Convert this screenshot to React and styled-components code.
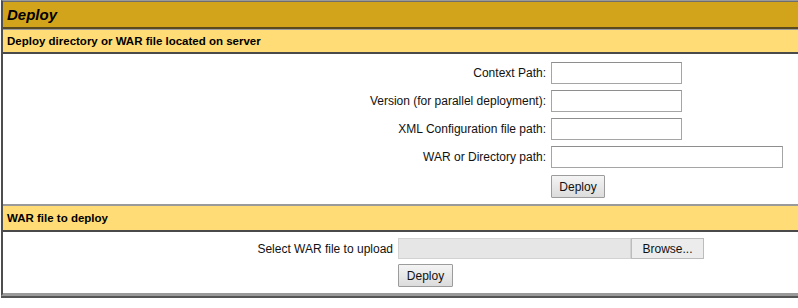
import React from 'react';
import styled, { createGlobalStyle } from 'styled-components';

const GlobalStyle = createGlobalStyle`
    body {
        margin: 0;
        background: #ffffff;
        font-family: "Liberation Sans", Arial, sans-serif;
    }
`;

const Page = styled.div`
    width: 798px;
    padding-left: 1px;
    box-sizing: border-box;
`;

const Table = styled.div`
    display: flex;
    flex-direction: column;
    border-top: 1px solid #9a9a9a;
    border-left: 2px solid #4e4e4e;
    border-bottom: 2px solid #9a9a9a;
    box-shadow: 0 2px 0 #555;
    margin-bottom: 2px;
`;

const Title = styled.div`
    height: 25px;
    background: #d2a41c;
    border-top: 1px solid #6e6e6e;
    border-bottom: 2px solid #5a4a1c;
    padding: 0 4px;
    display: flex;
    align-items: center;
    font-size: 15px;
    font-weight: bold;
    font-style: italic;
    color: #000;
`;

const SectionHeader = styled.div`
    height: ${p => p.$height}px;
    background: #ffdc75;
    border-top: 1px solid #9a9a9a;
    border-bottom: 2px solid #4a4a4a;
    padding: 0 4px;
    display: flex;
    align-items: center;
    font-size: 11.5px;
    font-weight: bold;
    color: #000;
`;

const FormBody = styled.div`
    display: grid;
    grid-template-columns: ${p => p.$labelWidth}px auto;
    column-gap: 5px;
    row-gap: ${p => p.$rowGap}px;
    padding: ${p => p.$pad};
    border-bottom: 1px solid #9a9a9a;
    background: #fff;
`;

const Label = styled.label`
    text-align: right;
    align-self: center;
    font-size: 12px;
    color: #111;
`;

const TextInput = styled.input`
    width: ${p => p.$width}px;
    height: 22px;
    box-sizing: border-box;
    border: 1px solid #a5a5a5;
    border-top-color: #8e8e8e;
    background: #fff;
    margin: 0;
    padding: 0 3px;
    font: 12px "Liberation Sans", Arial, sans-serif;
`;

const Button = styled.button`
    width: ${p => p.$width}px;
    height: 23px;
    box-sizing: border-box;
    margin-top: ${p => p.$offset || 0}px;
    border: 1px solid #9c9c9c;
    border-radius: 1px;
    background: linear-gradient(#f4f4f4, #dcdcdc);
    font: 12px "Liberation Sans", Arial, sans-serif;
    color: #111;
    padding: 0;
    justify-self: start;
`;

const FileBox = styled.div`
    display: flex;
    height: 21px;
`;

const FileField = styled.div`
    width: 233px;
    box-sizing: border-box;
    background: #e6e6e6;
    border: 1px solid #d2d2d2;
`;

const BrowseButton = styled.div`
    width: 73px;
    box-sizing: border-box;
    background: #ececec;
    border: 1px solid #bcbcbc;
    display: flex;
    align-items: center;
    justify-content: center;
    font-size: 12px;
    color: #111;
`;

const Spacer = styled.div``;

const serverFields = [
    { label: 'Context Path:', width: 131 },
    { label: 'Version (for parallel deployment):', width: 131 },
    { label: 'XML Configuration file path:', width: 131 },
    { label: 'WAR or Directory path:', width: 232 },
];

export default function App() {
    return (
        <Page>
            <GlobalStyle />
            <Table>
                <Title>Deploy</Title>
                <SectionHeader $height={22}>Deploy directory or WAR file located on server</SectionHeader>
                <FormBody $labelWidth={543} $rowGap={6} $pad="8px 0 6px 0">
                    {serverFields.map((f) => (
                        <React.Fragment key={f.label}>
                            <Label>{f.label}</Label>
                            <TextInput type="text" $width={f.width} />
                        </React.Fragment>
                    ))}
                    <Spacer />
                    <Button $width={54} $offset={1}>Deploy</Button>
                </FormBody>
                <SectionHeader $height={24}>WAR file to deploy</SectionHeader>
                <FormBody $labelWidth={390} $rowGap={5} $pad="6px 0 6px 0">
                    <Label>Select WAR file to upload</Label>
                    <FileBox>
                        <FileField />
                        <BrowseButton>Browse...</BrowseButton>
                    </FileBox>
                    <Spacer />
                    <Button $width={55}>Deploy</Button>
                </FormBody>
            </Table>
        </Page>
    );
}
